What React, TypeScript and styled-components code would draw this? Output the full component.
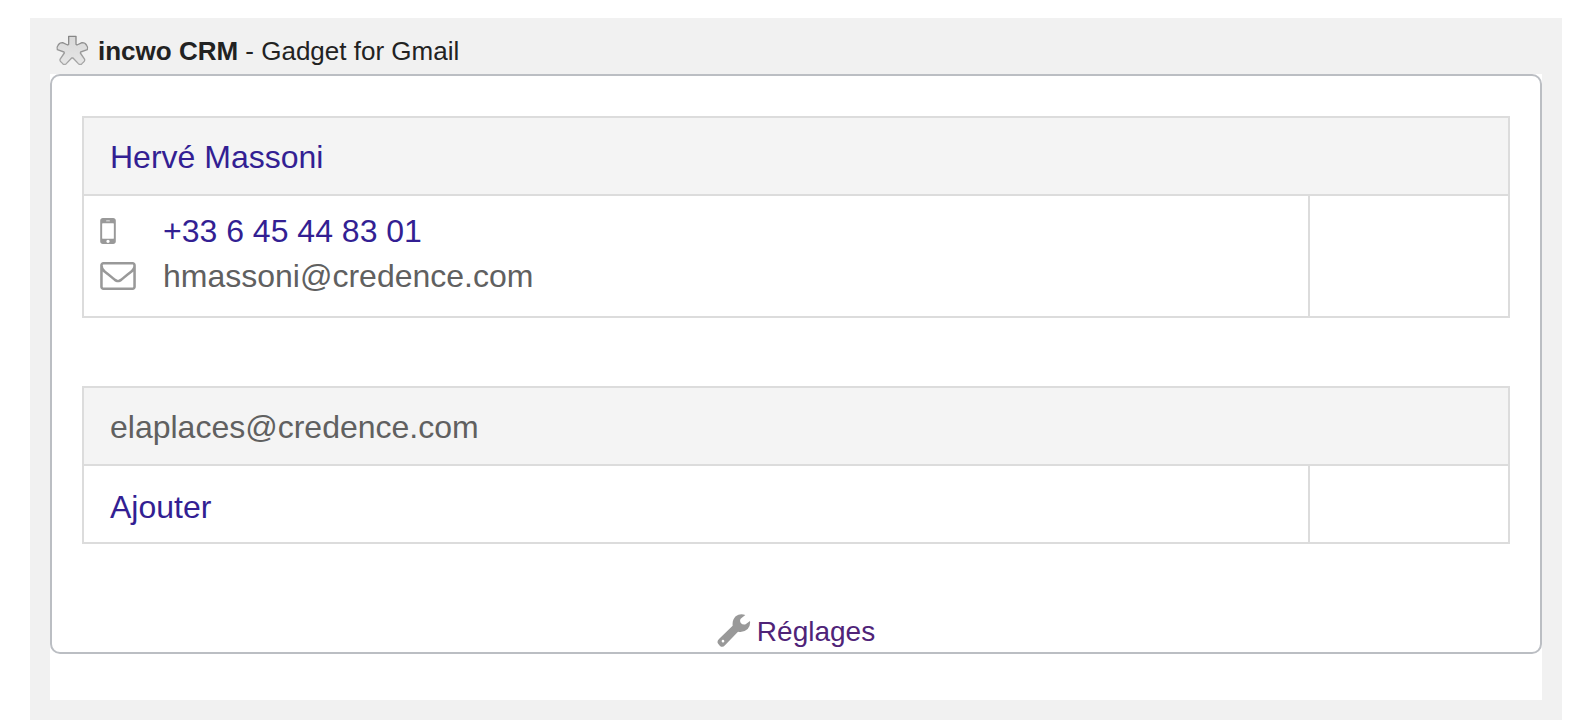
import React from "react";
import styled, { createGlobalStyle } from "styled-components";

const GlobalStyle = createGlobalStyle`
  *, *::before, *::after {
    box-sizing: border-box;
  }
  body {
    margin: 0;
    background: #ffffff;
    font-family: "Liberation Sans", Arial, Helvetica, sans-serif;
    color: #606060;
  }
`;

const Gadget = styled.main`
  margin: 18px 34px 0 30px;
  padding: 0 20px 20px;
  background: #f1f1f1;
`;

const Header = styled.header`
  display: flex;
  align-items: center;
  gap: 8px;
  height: 56px;
  padding: 10px 4px 0;
`;

const Title = styled.h1`
  margin: 0;
  font-size: 26px;
  font-weight: 400;
  color: #222222;
`;

const Body = styled.div`
  padding-bottom: 46px;
  background: #ffffff;
`;

const Panel = styled.div`
  display: flex;
  flex-direction: column;
  gap: 68px;
  padding: 40px 30px 0;
  border: 2px solid #bbbec3;
  border-radius: 10px;
`;

const Card = styled.section`
  border: 2px solid #dcdcdc;
  font-size: 32px;
`;

const CardTitle = styled.h2`
  display: flex;
  align-items: center;
  height: 76px;
  margin: 0;
  padding: 2px 26px 0;
  background: #f4f4f4;
  font-size: 32px;
  font-weight: 400;
`;

const CardRow = styled.div`
  display: flex;
  border-top: 2px solid #dcdcdc;
`;

const ContactCell = styled.div`
  flex: 1;
  padding: 12px 16px 18px;
`;

const ActionCell = styled.div`
  display: flex;
  flex: 1;
  align-items: center;
  height: 76px;
  padding: 6px 26px 0;
`;

const SideCell = styled.div`
  flex: 0 0 200px;
  border-left: 2px solid #dcdcdc;
`;

const ContactLine = styled.div`
  display: grid;
  grid-template-columns: 63px 1fr;
  align-items: center;
  height: 45px;
`;

const ContactValue = styled.span`
  padding-top: 2px;
`;

const Link = styled.a`
  color: #331f93;
  text-decoration: none;
`;

const Footer = styled.footer`
  display: flex;
  justify-content: center;
`;

const SettingsLink = styled.a`
  display: flex;
  gap: 6px;
  font-size: 28px;
  line-height: 40px;
  color: #4f2378;
  text-decoration: none;
`;

const Glyph = styled.svg`
  display: block;
  flex: none;
  fill: #999999;
`;

const Logo = () => (
  <svg width="36" height="36" viewBox="0 0 108 108" aria-hidden="true">
    <defs>
      <linearGradient id="logoFill" x1="0" y1="0" x2="0" y2="1">
        <stop offset="0" stopColor="#d8d8d8" />
        <stop offset="1" stopColor="#e6e6e6" />
      </linearGradient>
      <linearGradient id="logoEdge" x1="0" y1="0" x2="0" y2="1">
        <stop offset="0" stopColor="#868686" />
        <stop offset="1" stopColor="#a8a8a8" />
      </linearGradient>
    </defs>
    <path
      d="M44 10H66V34L69 36L84 29Q94 29 98 37Q103 43 100 50L80 57L79 60L92 79Q93 84 89 87Q85 90 82 94Q77 95 73 92L57 75H53L37 92Q33 95 28 94Q25 90 21 87Q17 84 18 79L31 60L30 57L10 50Q7 43 12 37Q16 29 26 29L41 36L44 34Z"
      fill="url(#logoFill)"
      stroke="url(#logoEdge)"
      strokeWidth="4"
      strokeLinejoin="round"
    />
  </svg>
);

const MobileIcon = () => (
  <Glyph width="16" height="26" viewBox="512 256 768 1280" aria-hidden="true">
    <path d="M976 1408q0-33-23.5-56.5t-56.5-23.5-56.5 23.5-23.5 56.5 23.5 56.5 56.5 23.5 56.5-23.5 23.5-56.5zm208-160v-704q0-13-9.5-22.5t-22.5-9.5h-512q-13 0-22.5 9.5t-9.5 22.5v704q0 13 9.5 22.5t22.5 9.5h512q13 0 22.5-9.5t9.5-22.5zm-192-848q0-16-16-16h-160q-16 0-16 16t16 16h160q16 0 16-16zm288-16v1024q0 52-38 90t-90 38h-512q-52 0-90-38t-38-90v-1024q0-52 38-90t90-38h512q52 0 90 38t38 90z" />
  </Glyph>
);

const EnvelopeIcon = () => (
  <Glyph width="36" height="28" viewBox="0 256 1792 1408" aria-hidden="true">
    <path d="M1664 1504v-768q-32 36-69 66-268 206-426 338-51 43-83 67t-86.5 48.5-102.5 24.5h-2q-48 0-102.5-24.5t-86.5-48.5-83-67q-158-132-426-338-37-30-69-66v768q0 13 9.5 22.5t22.5 9.5h1472q13 0 22.5-9.5t9.5-22.5zm0-1051v-24.5l-.5-13-3-12.5-5.5-9-9-7.5-14-2.5h-1472q-13 0-22.5 9.5t-9.5 22.5q0 168 147 284 193 152 401 317 6 5 35 29.5t46 37.5 44.5 31.5 50.5 27.5 43 9h2q20 0 43-9t50.5-27.5 44.5-31.5 46-37.5 35-29.5q208-165 401-317 54-43 100.5-115.5t46.5-131.5zm128-37v1088q0 66-47 113t-113 47h-1472q-66 0-113-47t-47-113v-1088q0-66 47-113t113-47h1472q66 0 113 47t47 113z" />
  </Glyph>
);

const WrenchIcon = () => (
  <Glyph width="34" height="36" viewBox="19 11 102 108" aria-hidden="true">
    <path
      fillRule="evenodd"
      d="M104 20Q88 14 75 24Q64 35 66 52L25 92Q17 100 23 107L28 113Q36 119 43 111L82 70Q100 73 111 62Q120 52 118 38L105 48Q96 50 91 45Q86 38 90 31ZM37 94.500a4 4 0 1 0 0 8a4 4 0 1 0 0-8Z"
    />
  </Glyph>
);

export default function App() {
  return (
    <>
      <GlobalStyle />
      <Gadget>
        <Header>
          <Logo />
          <Title>
            <strong>incwo CRM</strong> - Gadget for Gmail
          </Title>
        </Header>
        <Body>
          <Panel>
            <Card>
              <CardTitle>
                <Link href="#contact">Hervé Massoni</Link>
              </CardTitle>
              <CardRow>
                <ContactCell>
                  <ContactLine>
                    <MobileIcon />
                    <ContactValue>
                      <Link href="tel:+33645448301">+33 6 45 44 83 01</Link>
                    </ContactValue>
                  </ContactLine>
                  <ContactLine>
                    <EnvelopeIcon />
                    <ContactValue>hmassoni@credence.com</ContactValue>
                  </ContactLine>
                </ContactCell>
                <SideCell />
              </CardRow>
            </Card>
            <Card>
              <CardTitle>elaplaces@credence.com</CardTitle>
              <CardRow>
                <ActionCell>
                  <Link href="#add">Ajouter</Link>
                </ActionCell>
                <SideCell />
              </CardRow>
            </Card>
            <Footer>
              <SettingsLink href="#settings">
                <WrenchIcon />
                Réglages
              </SettingsLink>
            </Footer>
          </Panel>
        </Body>
      </Gadget>
    </>
  );
}
